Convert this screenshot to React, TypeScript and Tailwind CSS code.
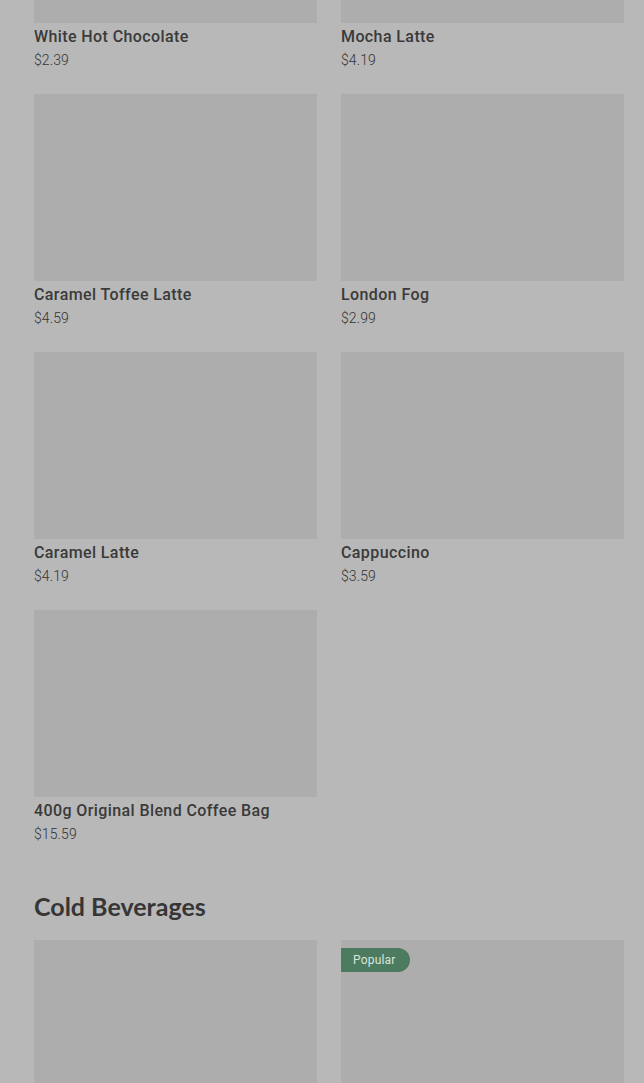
import React from "react";

type Item = { name: string; price: string; popular?: boolean };

const hot: Item[] = [
  { name: "White Hot Chocolate", price: "$2.39" },
  { name: "Mocha Latte", price: "$4.19" },
  { name: "Caramel Toffee Latte", price: "$4.59" },
  { name: "London Fog", price: "$2.99" },
  { name: "Caramel Latte", price: "$4.19" },
  { name: "Cappuccino", price: "$3.59" },
  { name: "400g Original Blend Coffee Bag", price: "$15.59" },
];

const cold: Item[] = [
  { name: "Iced Latte", price: "$3.99" },
  { name: "Iced Caramel Macchiato", price: "$4.59", popular: true },
];

const Card = ({ item }: { item: Item }) => (
  <div className="flex flex-col">
    <div className="relative h-[187px] w-full bg-[#adadad]">
      {item.popular && (
        <span className="absolute left-0 top-2 h-6 pl-3 pr-[14px] flex items-center rounded-r-full bg-[#4c7b60] text-[12px] tracking-[0.2px] text-[#d9e4dd]">
          Popular
        </span>
      )}
    </div>
    <p className="mt-[2px] text-[16px] leading-6 font-medium tracking-[0.4px] text-[#3a3a3a]">
      {item.name}
    </p>
    <p className="mt-[1px] text-[14px] leading-5 font-light tracking-[0.1px] text-[#333333]">
      {item.price}
    </p>
  </div>
);

export default function App() {
  return (
    <div className="min-h-screen bg-[#b8b8b8] overflow-hidden font-['Roboto',sans-serif]">
      <div className="-mt-[164px] pl-[34px] pr-[20px] pb-10">
        <div className="grid grid-cols-2 gap-x-6 gap-y-6">
          {hot.map((it) => (
            <Card key={it.name} item={it} />
          ))}
        </div>
        <h2 className="mt-[46px] mb-[18px] text-[25px] leading-8 font-bold text-[#363636] font-['Lato',sans-serif]">
          Cold Beverages
        </h2>
        <div className="grid grid-cols-2 gap-x-6 gap-y-6">
          {cold.map((it) => (
            <Card key={it.name} item={it} />
          ))}
        </div>
      </div>
    </div>
  );
}
